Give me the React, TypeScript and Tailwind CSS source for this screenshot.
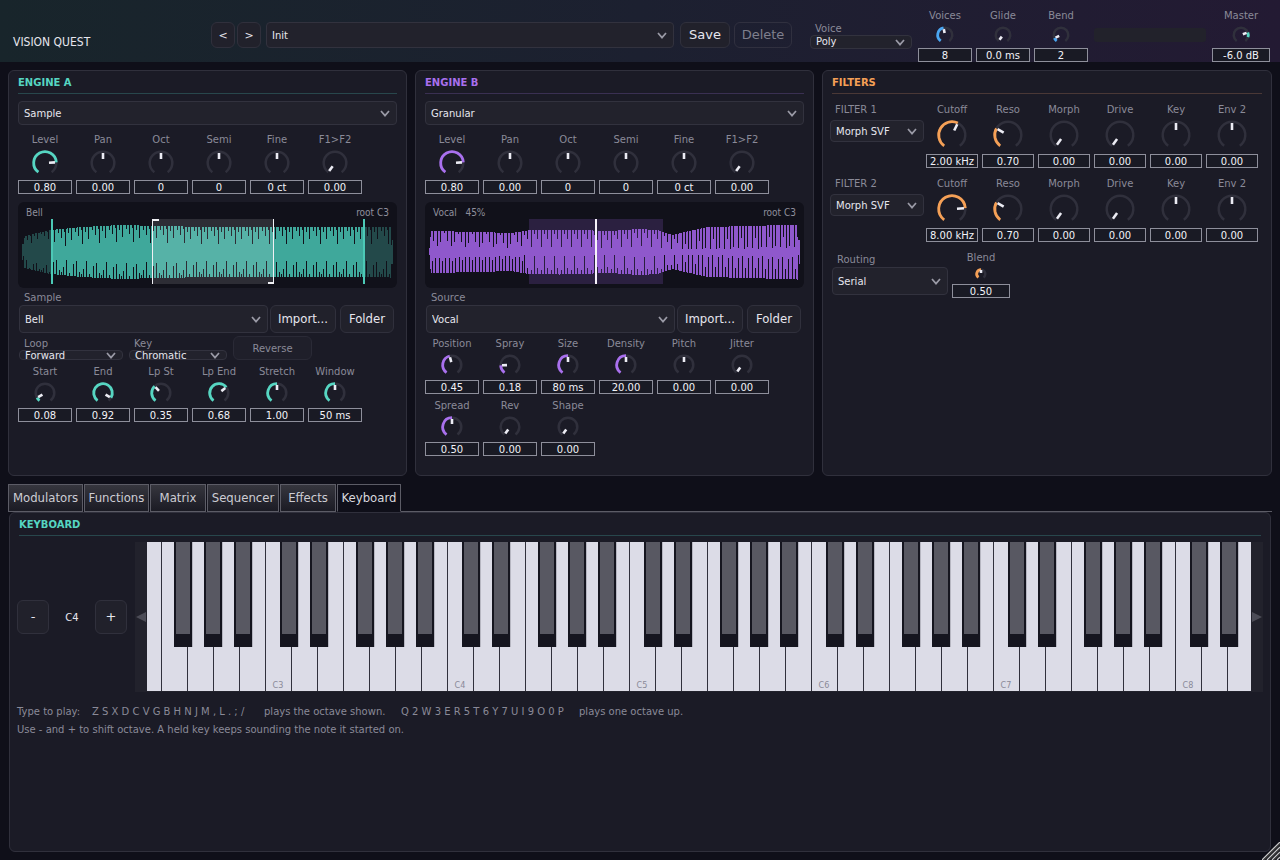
import { useId } from 'react'

const TEAL = '#56d6c2'
const PURPLE = '#a970ee'
const ORANGE = '#f5a056'
const BLUE = '#4aa6f2'

type KnobProps = {
    label: string
    value: string
    pos: number
    from?: number
    color?: string
    size?: keyof typeof knobSizes
    width?: string
}

const knobSizes = {
    xs: { box: 20, r: 4, inner: 1, outer: 4 },
    sm: { box: 26, r: 7, inner: 2, outer: 6 },
    md: { box: 30, r: 9, inner: 3, outer: 8 },
    lg: { box: 34, r: 11, inner: 4, outer: 10 },
    xl: { box: 38, r: 13, inner: 5, outer: 12 },
}

// 0..1 maps to -144deg..144deg, 0deg pointing up
const polar = (c: number, r: number, pos: number) => {
    const a = ((-144 + pos * 288) * Math.PI) / 180
    return [c + r * Math.sin(a), c - r * Math.cos(a)]
}

const arc = (c: number, r: number, a: number, b: number) => {
    const [x1, y1] = polar(c, r, a)
    const [x2, y2] = polar(c, r, b)
    const large = (b - a) * 288 > 180 ? 1 : 0
    return `M${x1} ${y1}A${r} ${r} 0 ${large} 1 ${x2} ${y2}`
}

const Knob = ({ label, value, pos, from = 0, color, size = 'lg', width = 'w-[54px]' }: KnobProps) => {
    const id = useId()
    const s = knobSizes[size]
    const c = s.box / 2
    const [px1, py1] = polar(c, s.inner, pos)
    const [px2, py2] = polar(c, s.outer, pos)
    return (
        <div className={`flex flex-col items-center shrink-0 ${width}`}>
            <label htmlFor={id} className="h-3.5 leading-[15px] text-[#8a8a98] whitespace-nowrap">{label}</label>
            <svg width={s.box} height={s.box} aria-hidden="true" fill="none">
                <path d={arc(c, s.r + 0.3, 0, 1)} stroke="#30303c" strokeWidth="2.5" />
                {color && <path d={arc(c, s.r + 0.3, Math.min(from, pos), Math.max(from, pos))} stroke={color} strokeWidth="2.8" />}
                <path d={`M${px1} ${py1}L${px2} ${py2}`} stroke="#ececf4" strokeWidth="2.6" />
            </svg>
            <input
                id={id}
                defaultValue={value}
                className="w-full h-3.5 min-w-0 p-0 text-center leading-3 text-[#f2f2f8] bg-[#191a24] border border-[#8e8f9b] outline-none"
            />
        </div>
    )
}

type SelectProps = {
    label: string
    options: string[]
    className?: string
    showLabel?: boolean
    height?: string
}

const Select = ({ label, options, className = '', showLabel = true, height = 'h-7 pt-0.5' }: SelectProps) => {
    const id = useId()
    return (
        <div className={`flex flex-col min-w-0 ${className}`}>
            {showLabel && <label htmlFor={id} className="h-3.5 leading-[15px] text-[#8a8a98] pl-[5px]">{label}</label>}
            <div className="relative">
                <select
                    id={id}
                    aria-label={showLabel ? undefined : label}
                    className={`block w-full appearance-none rounded-[4px] border border-[#32323e] bg-[#22222c] pl-[5px] pr-5 leading-none text-[#e6e6ee] outline-none ${height}`}
                >
                    {options.map((o) => <option key={o}>{o}</option>)}
                </select>
                <svg className="absolute right-[7px] inset-y-0 my-auto pointer-events-none" width="10" height="7" fill="none" aria-hidden="true">
                    <path d="M1 1L5 5.6L9 1" stroke="#9a9aa6" strokeWidth="1.7" />
                </svg>
            </div>
        </div>
    )
}

const Button = ({ children, className = '', label }: { children: React.ReactNode; className?: string; label?: string }) => (
    <button
        type="button"
        aria-label={label}
        className={`shrink-0 flex items-center justify-center rounded-md border border-[#30303c] bg-[#21212b] text-[#e6e6ee] ${className}`}
    >
        {children}
    </button>
)

const SourceButtons = () => (
    <>
        <Button className="w-[66px] h-7 text-[13px] font-['DejaVu_Sans_Condensed','DejaVu_Sans',sans-serif]">Import...</Button>
        <Button className="w-[54px] h-7 ml-0.5 text-[13px] font-['DejaVu_Sans_Condensed','DejaVu_Sans',sans-serif]">Folder</Button>
    </>
)

const Panel = ({ title, titleClass, ruleClass, children }: { title: string; titleClass: string; ruleClass: string; children: React.ReactNode }) => (
    <section className="min-w-0 rounded-md border border-[#30303c] bg-[#1b1b26] px-[9px] pb-[19px]">
        <h2 className={`h-[23px] leading-[23px] font-bold border-b ${titleClass} ${ruleClass}`}>{title}</h2>
        {children}
    </section>
)

const WAVE_W = 371
const MID = 50

// linear interpolation through [x, half height] points
const envelope = (points: number[][], x: number) => {
    for (let i = 1; i < points.length; i++) {
        const [x0, y0] = points[i - 1]
        const [x1, y1] = points[i]
        if (x <= x1) return y0 + ((y1 - y0) * (x - x0)) / (x1 - x0)
    }
    return points[points.length - 1][1]
}

const column = (x: number, up: number, down: number) => `M${x} ${MID - up}h1V${MID + down}h-1z`

const bellPoints = [[0, 8], [1, 8], [2, 16], [28, 22], [60, 25], [98, 27], [135, 26], [190, 25], [368, 25.5], [369, 12], [371, 12]]
const bellTop = [0, 0, 4, 0, 0, 9, 0, 0, 3, 17, 0, 0, 5, 0, 0, 12, 0]
const bellBottom = [0, 8, 0, 0, 16, 0, 0, 3, 0, 0, 0, 12, 0, 0, 15, 0, 0, 5, 0, 3]

const bellWave = () => {
    let d = ''
    for (let x = 0; x < WAVE_W; x++) {
        const h = envelope(bellPoints, x)
        const edge = x < 28 ? 0.5 : 1
        d += column(x, h - bellTop[x % 17] * edge, h - bellBottom[x % 20] * edge)
    }
    return d
}

const vocalPoints = [[0, 4], [1, 17], [2, 21], [50, 20], [82, 19], [100, 22], [130, 22.5], [180, 21], [210, 23], [228, 22], [243, 17], [260, 21], [278, 25], [320, 26], [368, 27.5], [369, 12], [371, 12]]
// notch depths repeat inside each stretch of the sample
const vocalNotches = [
    { until: 95, top: [0, 2, 0, 0, 10, 0, 0, 0, 15, 0, 0, 11, 0, 0], bottom: [15, 0, 0, 12, 0, 0, 15, 0, 0, 0] },
    { until: 250, top: [0, 0, 17, 0, 0, 4, 0, 0, 9, 0], bottom: [0, 0, 4, 0, 0, 18, 0, 0, 6, 0] },
    { until: WAVE_W, top: [0, 22, 0, 0, 12, 0, 0, 23, 0, 0, 21, 0, 0, 0], bottom: [0, 0, 0, 22, 0, 0, 10, 0, 0, 20] },
]

const vocalWave = () => {
    let d = ''
    for (let x = 0; x < WAVE_W; x++) {
        const h = envelope(vocalPoints, x)
        const { top, bottom } = vocalNotches.find((n) => x < n.until)!
        d += column(x, Math.max(3, h - top[x % top.length]), Math.max(3, h - bottom[x % bottom.length]))
    }
    return d
}

const WaveFrame = ({ name, children }: { name: string; children: React.ReactNode }) => (
    <div className="relative mt-2 h-[86px] rounded-md bg-[#11111a] px-1 overflow-hidden">
        <svg className="w-full h-full" viewBox="0 0 371 86" preserveAspectRatio="none" shapeRendering="crispEdges" aria-hidden="true">
            {children}
        </svg>
        <div className="absolute inset-x-2 top-[3px] flex justify-between leading-[15px] text-[#8f8f9c] whitespace-pre font-['DejaVu_Sans_Condensed','DejaVu_Sans',sans-serif]">
            <span>{name}</span>
            <span>root C3</span>
        </div>
    </div>
)

const BellWave = () => {
    const d = bellWave()
    return (
        <WaveFrame name="Bell">
            <clipPath id="played"><rect x="30" width="312" height="86" /></clipPath>
            <path d={d} fill="#23494a" />
            <g clipPath="url(#played)">
                <rect x="30" y="22" width="312" height="57" fill="#11111a" />
                <path d={d} fill="#3fa89b" />
            </g>
            <rect x="131" y="17" width="121" height="65" fill="#fff" opacity="0.12" />
            <path d="M29 17h2v65h-2zM341 17h2v65h-2z" fill="#4cc9b6" />
            <path d="M130 17h1v65h-1zM130 17h7v2h-7zM251 17h1v65h-1zM246 80h6v2h-6z" fill="#f0f0f4" />
        </WaveFrame>
    )
}

const VocalWave = () => (
    <WaveFrame name="Vocal   45%">
        <rect x="100" y="17" width="134" height="65" fill="#2b2040" />
        <path d={vocalWave()} fill="#8f58cc" />
        <rect x="166" y="17" width="2" height="65" fill="#f6f2fa" />
    </WaveFrame>
)

const engineKnobs = (color: string): KnobProps[] => [
    { label: 'Level', value: '0.80', pos: 0.8, color },
    { label: 'Pan', value: '0.00', pos: 0.5 },
    { label: 'Oct', value: '0', pos: 0.5 },
    { label: 'Semi', value: '0', pos: 0.5 },
    { label: 'Fine', value: '0 ct', pos: 0.5 },
    { label: 'F1>F2', value: '0.00', pos: 0 },
]

const sampleKnobs: KnobProps[] = [
    { label: 'Start', value: '0.08', pos: 0.08, color: TEAL },
    { label: 'End', value: '0.92', pos: 0.92, color: TEAL },
    { label: 'Lp St', value: '0.35', pos: 0.35, color: TEAL },
    { label: 'Lp End', value: '0.68', pos: 0.68, color: TEAL },
    { label: 'Stretch', value: '1.00', pos: 0.5, color: TEAL },
    { label: 'Window', value: '50 ms', pos: 0.5, color: TEAL },
]

const grainKnobs: KnobProps[] = [
    { label: 'Position', value: '0.45', pos: 0.45, color: PURPLE },
    { label: 'Spray', value: '0.18', pos: 0.18, color: PURPLE },
    { label: 'Size', value: '80 ms', pos: 0.5, color: PURPLE },
    { label: 'Density', value: '20.00', pos: 0.5, color: PURPLE },
    { label: 'Pitch', value: '0.00', pos: 0.5 },
    { label: 'Jitter', value: '0.00', pos: 0 },
]

const grainKnobs2: KnobProps[] = [
    { label: 'Spread', value: '0.50', pos: 0.5, color: PURPLE },
    { label: 'Rev', value: '0.00', pos: 0 },
    { label: 'Shape', value: '0.00', pos: 0 },
]

const KnobRow = ({ knobs, size, className = '' }: { knobs: KnobProps[]; size: KnobProps['size']; className?: string }) => (
    <div className={`flex gap-1 ${className}`}>
        {knobs.map((k) => <Knob key={k.label} {...k} size={size} />)}
    </div>
)

const Filter = ({ name, cutoff, cutoffPos }: { name: string; cutoff: string; cutoffPos: number }) => (
    <div className="flex gap-1 mt-2">
        <Select label={name} options={['Morph SVF', 'Ladder', 'Comb']} className="w-[94px] -mx-0.5 shrink-0 gap-1" height="h-[22px] pt-0.5" />
        <Knob label="Cutoff" value={cutoff} pos={cutoffPos} color={ORANGE} size="xl" width="w-[52px]" />
        <Knob label="Reso" value="0.70" pos={0.29} color={ORANGE} size="xl" width="w-[52px]" />
        <Knob label="Morph" value="0.00" pos={0} size="xl" width="w-[52px]" />
        <Knob label="Drive" value="0.00" pos={0} size="xl" width="w-[52px]" />
        <Knob label="Key" value="0.00" pos={0.5} size="xl" width="w-[52px]" />
        <Knob label="Env 2" value="0.00" pos={0.5} size="xl" width="w-[52px]" />
    </div>
)

const OCTAVE = 182
const blackOffsets = [16, 46, 92, 122, 152]

const Piano = () => {
    // the first C is left of the visible range
    const firstC = 118 - OCTAVE
    const whites = Array.from({ length: 46 }, (_, i) => firstC + i * 26)
    const blacks = Array.from({ length: 7 }, (_, o) => blackOffsets.map((b) => firstC + o * OCTAVE + b)).flat()
    return (
        <svg className="flex-1 min-w-0 h-[150px]" shapeRendering="crispEdges" role="img" aria-label="Keyboard">
            <rect width="100%" height="149" fill="#dcdce7" />
            {whites.map((x) => <rect key={x} x={x} width="1" height="149" fill="#30303c" />)}
            {blacks.filter((x) => x > 0 && x < 1104).map((x) => (
                <g key={x}>
                    <rect x={x - 1} width="19" height="105" fill="#8f8f9c" opacity="0.5" />
                    <rect x={x - 1} width="18" height="105" fill="#15151f" />
                    <rect x={x + 1} width="14" height="92" fill="#585862" />
                </g>
            ))}
            {[3, 4, 5, 6, 7, 8].map((n, i) => (
                <text key={n} x={131 + i * OCTAVE} y="146" textAnchor="middle" fill="#8a8a98" className="text-[9px] font-['DejaVu_Sans_Condensed','DejaVu_Sans',sans-serif]">
                    {`C${n}`}
                </text>
            ))}
        </svg>
    )
}

const tabs = [
    { name: 'Modulators', width: 'w-[75px]' },
    { name: 'Functions', width: 'w-[65px]' },
    { name: 'Matrix', width: 'w-[56px]' },
    { name: 'Sequencer', width: 'w-[72px]' },
    { name: 'Effects', width: 'w-[56px]' },
    { name: 'Keyboard', width: 'w-[64px]' },
]

const App = () => {
    return (
        <div className="relative min-h-screen flex flex-col bg-[#0f0f19] text-[10px] font-['DejaVu_Sans',sans-serif]">
            {/* Header */}
            <header className="flex h-[62px] pl-[13px] pr-[10px] bg-gradient-to-r from-[#18252b] via-[#1c2030] to-[#231a33]">
                <h1 className="w-[198px] shrink-0 pt-[34px] leading-4 text-[12px] text-[#e6e6ee] whitespace-nowrap font-['DejaVu_Sans_Condensed','DejaVu_Sans',sans-serif]">VISION QUEST</h1>
                <div className="flex flex-1 min-w-0 pt-[22px]">
                    <Button label="Previous preset" className="w-6 h-[26px] pt-0.5 text-[11px]">&lt;</Button>
                    <Button label="Next preset" className="w-6 h-[26px] ml-0.5 pt-0.5 text-[11px]">&gt;</Button>
                    <Select label="Preset" showLabel={false} options={['Init']} className="flex-1 ml-[5px]" height="h-[26px] pt-0.5" />
                    <Button className="w-[50px] h-[26px] ml-1.5 text-[13px]">Save</Button>
                    <button type="button" disabled className="w-[58px] h-[26px] ml-1 shrink-0 rounded-md border border-[#30303f] text-[13px] text-[#7f7f8d]">Delete</button>
                </div>
                <Select label="Voice" options={['Poly', 'Mono', 'Legato']} className="w-[102px] shrink-0 ml-[18px] pt-[21px]" height="h-3.5" />
                <div className="flex gap-1 ml-1.5 pt-2">
                    <Knob label="Voices" value="8" pos={0.46} color={BLUE} size="sm" />
                    <Knob label="Glide" value="0.0 ms" pos={0} size="sm" />
                    <Knob label="Bend" value="2" pos={0.1} color={BLUE} size="sm" />
                </div>
                <div className="w-28 h-3.5 mt-7 mx-1.5 shrink-0 rounded-[3px] bg-[#22222b]"></div>
                <div className="pt-2">
                    <Knob label="Master" value="-6.0 dB" pos={0.74} from={0.87} color={TEAL} size="sm" width="w-[58px]" />
                </div>
            </header>

            {/* Engines and filters */}
            <main className="flex-1 flex flex-col px-2 pt-2 pb-2">
                <div className="grid grid-cols-[399fr_399fr_450fr] gap-2">
                    <Panel title="ENGINE A" titleClass="text-[#56d6c2]" ruleClass="border-[#28474c]">
                        <Select label="Engine A type" showLabel={false} options={['Sample', 'Granular', 'Wavetable']} className="mt-[7px]" height="h-6 pt-0.5" />
                        <KnobRow knobs={engineKnobs(TEAL)} size="lg" className="mt-[7px]" />
                        <BellWave />
                        <div className="flex items-end gap-0.5 mt-0.5 pl-px pr-[3px]">
                            <Select label="Sample" options={['Bell']} className="flex-1 gap-px" />
                            <SourceButtons />
                        </div>
                        <div className="flex gap-1.5 mt-[3px] pl-px">
                            <Select label="Loop" options={['Forward', 'Ping-pong', 'Off']} className="w-[104px]" height="h-2.5" />
                            <Select label="Key" options={['Chromatic', 'Fixed']} className="w-[98px]" height="h-2.5" />
                            <button type="button" className="w-[79px] h-6 rounded-md border border-[#2a2a36] bg-[#1f1f2a] text-[#8a8a98]">Reverse</button>
                        </div>
                        <KnobRow knobs={sampleKnobs} size="md" className="mt-1" />
                    </Panel>

                    <Panel title="ENGINE B" titleClass="text-[#a970ee]" ruleClass="border-[#3a3052]">
                        <Select label="Engine B type" showLabel={false} options={['Granular', 'Sample', 'Wavetable']} className="mt-[7px]" height="h-6 pt-0.5" />
                        <KnobRow knobs={engineKnobs(PURPLE)} size="lg" className="mt-[7px]" />
                        <VocalWave />
                        <div className="flex items-end gap-0.5 mt-0.5 pl-px pr-[3px]">
                            <Select label="Source" options={['Vocal']} className="flex-1 gap-px" />
                            <SourceButtons />
                        </div>
                        <KnobRow knobs={grainKnobs} size="md" className="mt-[3px]" />
                        <KnobRow knobs={grainKnobs2} size="md" className="mt-1" />
                    </Panel>

                    <Panel title="FILTERS" titleClass="text-[#f5a056]" ruleClass="border-[#4a3836]">
                        <Filter name="FILTER 1" cutoff="2.00 kHz" cutoffPos={0.59} />
                        <Filter name="FILTER 2" cutoff="8.00 kHz" cutoffPos={0.8} />
                        <div className="flex items-start gap-1 mt-2">
                            <Select label="Routing" options={['Serial', 'Parallel']} className="w-[116px] pt-0.5 gap-px" />
                            <Knob label="Blend" value="0.50" pos={0.5} color={ORANGE} size="xs" width="w-[58px]" />
                        </div>
                    </Panel>
                </div>

                {/* Tabs */}
                <div className="mt-2 flex-1 flex flex-col">
                    <div role="tablist" className="flex gap-px h-7 text-[13px] font-['DejaVu_Sans_Condensed','DejaVu_Sans',sans-serif]">
                        {tabs.map((t) => {
                            const active = t.name === 'Keyboard'
                            return (
                                <button
                                    key={t.name}
                                    type="button"
                                    role="tab"
                                    aria-selected={active}
                                    className={`${t.width} shrink-0 flex items-center justify-center border ${active ? 'border-[#5c5c66] border-b-transparent bg-[#0f0f19] text-[#d8d8de]' : 'border-[#5c5c66] bg-gradient-to-b from-[#36363e] to-[#1b1b24] text-[#cdcdd4]'}`}
                                >
                                    {t.name}
                                </button>
                            )
                        })}
                        <div className="flex-1 -ml-px border-b border-[#5c5c66]"></div>
                    </div>

                    <section className="flex-1 mx-px rounded-md border border-[#30303c] bg-[#1b1b26]">
                        <h2 className="mx-[9px] h-[23px] leading-[23px] font-bold text-[#56d6c2] border-b border-[#28474c]">KEYBOARD</h2>
                        <div className="flex items-center mt-1.5 px-[7px]">
                            <Button label="Octave down" className="w-8 h-[34px] text-[13px]">-</Button>
                            <span className="w-[46px] text-center text-[#e6e6ee]">C4</span>
                            <Button label="Octave up" className="w-8 h-[34px] text-[13px]">+</Button>
                            <div className="flex flex-1 min-w-0 ml-2 bg-[#22222c]">
                                <button type="button" aria-label="Scroll left" className="w-3 flex items-center justify-end pr-px">
                                    <svg width="10" height="10"><path d="M0 5L10 0V10z" fill="#4c4c57" /></svg>
                                </button>
                                <Piano />
                                <button type="button" aria-label="Scroll right" className="w-3 flex items-center pl-px">
                                    <svg width="10" height="10"><path d="M10 5L0 0V10z" fill="#4c4c57" /></svg>
                                </button>
                            </div>
                        </div>
                        <div className="mt-[11px] pl-[7px] leading-[18px] text-[#8a8a98]">
                            <p className="flex whitespace-nowrap">
                                <span className="w-[75px]">Type to play:</span>
                                <span className="w-[172px]">Z S X D C V G B H N J M , L . ; /</span>
                                <span className="w-[137px]">plays the octave shown.</span>
                                <span className="w-[178px]">Q 2 W 3 E R 5 T 6 Y 7 U I 9 O 0 P</span>
                                <span>plays one octave up.</span>
                            </p>
                            <p>Use - and + to shift octave. A held key keeps sounding the note it started on.</p>
                        </div>
                    </section>
                </div>
            </main>

            {/* Window resize grip */}
            <svg className="absolute right-0 bottom-0" width="18" height="18" fill="none" aria-hidden="true">
                <path d="M0 18L18 0M5 18L18 5M10 18L18 10M15 18L18 15" stroke="#c8c8c8" strokeWidth="1.3" />
                <path d="M2 18L18 2M7 18L18 7M12 18L18 12" stroke="#3a3a3a" strokeWidth="1.3" />
            </svg>
        </div>
    )
}

export default App
